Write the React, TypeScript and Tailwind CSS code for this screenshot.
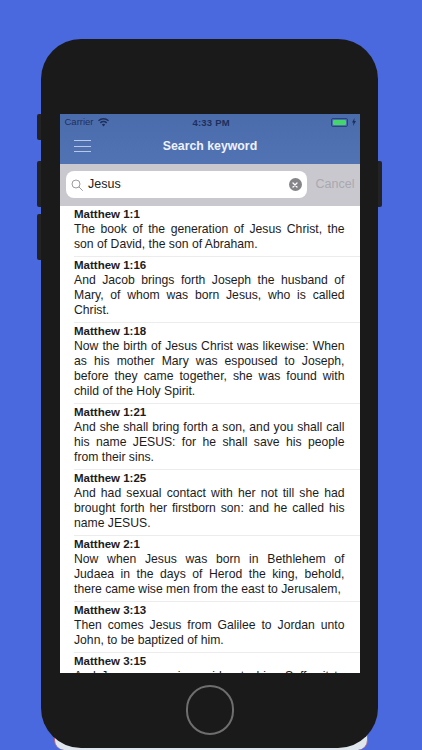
const verses = [
  {
    ref: 'Matthew 1:1',
    text: 'The book of the generation of Jesus Christ, the son of David, the son of Abraham.',
  },
  {
    ref: 'Matthew 1:16',
    text: 'And Jacob brings forth Joseph the husband of Mary, of whom was born Jesus, who is called Christ.',
  },
  {
    ref: 'Matthew 1:18',
    text: 'Now the birth of Jesus Christ was likewise: When as his mother Mary was espoused to Joseph, before they came together, she was found with child of the Holy Spirit.',
  },
  {
    ref: 'Matthew 1:21',
    text: 'And she shall bring forth a son, and you shall call his name JESUS: for he shall save his people from their sins.',
  },
  {
    ref: 'Matthew 1:25',
    text: 'And had sexual contact with her not till she had brought forth her firstborn son: and he called his name JESUS.',
  },
  {
    ref: 'Matthew 2:1',
    text: 'Now when Jesus was born in Bethlehem of Judaea in the days of Herod the king, behold, there came wise men from the east to Jerusalem,',
  },
  {
    ref: 'Matthew 3:13',
    text: 'Then comes Jesus from Galilee to Jordan unto John, to be baptized of him.',
  },
  {
    ref: 'Matthew 3:15',
    text: 'And Jesus answering said unto him, Suffer it to be so now: for thus it becomes us to fulfil all righteousness.',
  },
]

function StatusBar() {
  return (
    <div className="relative flex h-[16px] items-center justify-between pl-[5px] pr-[4px] text-[9.5px] text-[#1f2f5c]">
      <div className="flex items-center gap-[4px]">
        <span>Carrier</span>
        <svg width="11" height="9" viewBox="0 0 22 16" fill="#1f2f5c">
          <path d="M11 16 7.6 12a5 5 0 0 1 6.8 0L11 16Z" />
          <path d="M5.6 9.8 3.6 7.5a11 11 0 0 1 14.8 0l-2 2.3a8 8 0 0 0-10.8 0Z" />
          <path d="M1.9 5.6 0 3.4a16.5 16.5 0 0 1 22 0l-1.9 2.2a13.6 13.6 0 0 0-18.2 0Z" />
        </svg>
      </div>
      <span className="absolute left-[133px] top-[2px] font-bold tracking-[0.2px]">4:33 PM</span>
      <div className="flex items-center gap-[4px]">
        <div className="flex h-[9px] w-[17px] items-center rounded-[2px] border border-[#27457c] p-[1px]">
          <div className="h-full w-full rounded-[1px] bg-[#45d66b]" />
        </div>
        <svg width="4" height="8" viewBox="0 0 8 16" fill="#1f2f5c">
          <path d="M5 0 0 9h3l-1 7 6-10H4.600L5 0Z" />
        </svg>
      </div>
    </div>
  )
}

function NavBar() {
  return (
    <div className="relative flex h-[34px] items-center justify-center pb-px pl-px">
      <div className="absolute left-[14px] top-[10px] flex w-[17px] flex-col gap-[4.5px]">
        <div className="h-px bg-[#b8c9e6]" />
        <div className="h-px bg-[#b8c9e6]" />
        <div className="h-px bg-[#b8c9e6]" />
      </div>
      <span className="text-[12.300px] font-bold text-[#eef2f9]">Search keyword</span>
    </div>
  )
}

function SearchBar() {
  return (
    <div className="flex h-[42px] items-center gap-[9px] bg-[#c9c8ce] pb-px pl-[6px]">
      <div className="flex h-[27px] w-[241px] items-center rounded-[8px] bg-white pl-[5px] pr-[5px]">
        <svg width="12" height="12" viewBox="0 0 12 12" fill="none" stroke="#9c9ca1" strokeWidth="1">
          <circle cx="5" cy="5" r="4" />
          <path d="m8 8 3.500 3.500" strokeLinecap="round" />
        </svg>
        <span className="ml-[5.500px] flex-1 text-[12.500px] text-[#222]">Jesus</span>
        <div className="flex h-[13px] w-[13px] items-center justify-center rounded-full bg-[#858589]">
          <svg width="6" height="6" viewBox="0 0 6 6" stroke="white" strokeWidth="1.300" strokeLinecap="round">
            <path d="m1 1 4 4M5 1 1 5" />
          </svg>
        </div>
      </div>
      <span className="text-[12.500px] text-[#a9a9ae]">Cancel</span>
    </div>
  )
}

export default function App() {
  return (
    <div className="relative h-[750px] w-[422px] overflow-hidden bg-[#4a69df] pt-[39px] font-['Liberation_Sans',Arial,sans-serif]">
      {/* silver back of the phone, just visible under the body */}
      <div className="absolute bottom-0 left-[54px] h-[30px] w-[314px] rounded-b-[10px] border-x border-[#b06a80] bg-[#dfe6ee]" />

      {/* side buttons */}
      <div className="absolute left-[37px] top-[114px] h-[26px] w-[5px] rounded-l-[2px] bg-[#232323]" />
      <div className="absolute left-[37px] top-[161px] h-[46px] w-[5px] rounded-l-[2px] bg-[#232323]" />
      <div className="absolute left-[37px] top-[214px] h-[46px] w-[5px] rounded-l-[2px] bg-[#232323]" />
      <div className="absolute left-[377px] top-[161px] h-[46px] w-[5px] rounded-r-[2px] bg-[#232323]" />

      <div className="relative ml-[41px] flex h-[709px] w-[337px] flex-col items-center rounded-[40px] bg-[#1a1a1a] pt-[75px]">
        <div className="flex h-[559px] w-[300px] flex-col overflow-hidden bg-white">
          <div className="bg-gradient-to-b from-[#4b6cab] to-[#5173b4]">
            <StatusBar />
            <NavBar />
          </div>
          <SearchBar />
          <div className="min-h-0 flex-1">
            {verses.map((v) => (
              <div key={v.ref} className="ml-[14.500px] border-b border-[#ececec] pb-[4px] pr-[15px] pt-px text-[12.200px] leading-[15px] text-[#1c1c1c]">
                <div className="text-[11.500px] font-bold">{v.ref}</div>
                <p className="text-justify">{v.text}</p>
              </div>
            ))}
          </div>
        </div>
        <div className="mt-[12px] h-[50px] w-[48px] rounded-full border-2 border-[#6e6e6e]" />
      </div>
    </div>
  )
}
